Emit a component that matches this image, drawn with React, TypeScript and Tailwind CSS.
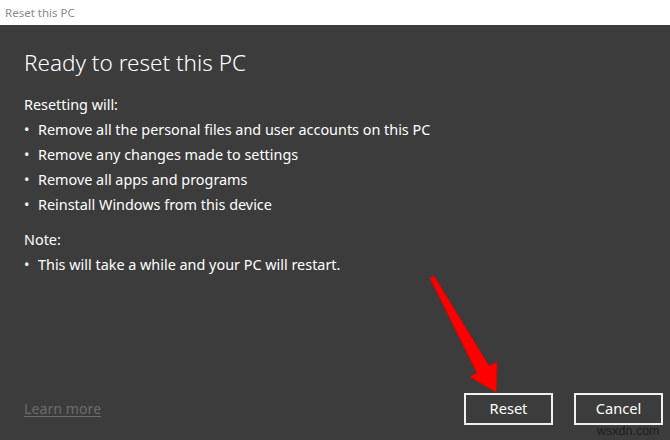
import React from "react";

const removals = [
  "Remove all the personal files and user accounts on this PC",
  "Remove any changes made to settings",
  "Remove all apps and programs",
  "Reinstall Windows from this device",
];

const Bullet = ({ children }: { children: React.ReactNode }) => (
  <li className="flex">
    <span className="w-[14px] shrink-0">•</span>
    <span>{children}</span>
  </li>
);

export default function App() {
  return (
    <div className="relative w-[670px] h-[440px] flex flex-col overflow-hidden font-['Noto_Sans','Open_Sans',sans-serif] text-white">
      {/* Title bar */}
      <div className="h-[25px] shrink-0 bg-white flex items-center pl-[5px] text-[11.5px] text-[#8a8a8a]">
        Reset this PC
      </div>

      {/* Dialog body */}
      <div className="flex-1 bg-[#3c3c3c] flex flex-col pl-6 pr-[7px] pb-[15px]">
        <h1 className="mt-[22px] text-[22.5px] leading-[32px] font-light">Ready to reset this PC</h1>

        <p className="mt-[13px] text-[14.4px] leading-[25px]">Resetting will:</p>
        <ul className="text-[14.4px] leading-[25px]">
          {removals.map((r) => (
            <Bullet key={r}>{r}</Bullet>
          ))}
        </ul>

        <p className="mt-[10px] text-[14.4px] leading-[25px]">Note:</p>
        <ul className="text-[14.4px] leading-[25px]">
          <Bullet>This will take a while and your PC will restart.</Bullet>
        </ul>

        <div className="flex-1" />

        <div className="flex items-center">
          <a className="text-[14.2px] text-[#6b6b6b] underline underline-offset-2 cursor-pointer">Learn more</a>
          <div className="ml-auto flex gap-[21px]">
            <button className="w-[89px] h-[32px] border-2 border-[#f0f0f0] text-[14.6px] text-white">Reset</button>
            <button className="w-[89px] h-[32px] border-2 border-[#f0f0f0] text-[14.6px] text-white">Cancel</button>
          </div>
        </div>
      </div>

      {/* Red annotation arrow */}
      <svg className="absolute left-0 top-0 pointer-events-none" width="670" height="440" viewBox="0 0 670 440">
        <polygon
          points="430,278 434,276 489,366 497,362 496,392 470,377 477,373"
          fill="#ff0000"
          stroke="#e00000"
          strokeWidth="0.8"
          strokeLinejoin="round"
        />
      </svg>

      {/* Watermark */}
      <span className="absolute left-[597px] top-[424px] whitespace-nowrap text-[12.5px] leading-[14px] text-[#1e1e1e] font-['Liberation_Sans',Arial,sans-serif]">
        wsxdn.com
      </span>
    </div>
  );
}
